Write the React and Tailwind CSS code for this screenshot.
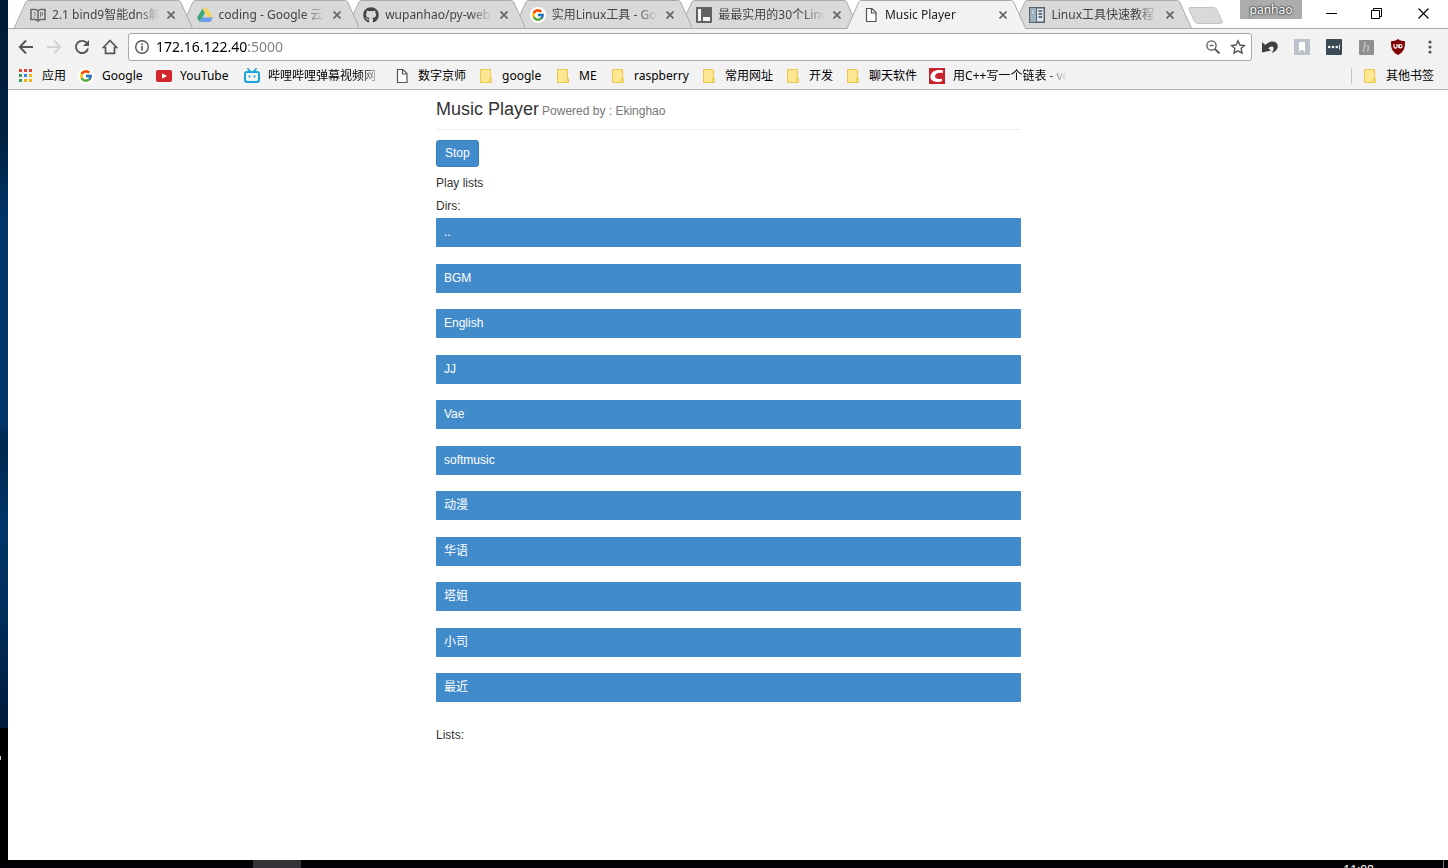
import React from "react";
import { FcGoogle } from "react-icons/fc";
import { FaGithub } from "react-icons/fa";

/* ---------- Icons ---------- */

const Svg = ({ className = "size-4", box = "0 0 16 16", children }) => (
  <svg viewBox={box} className={`${className} shrink-0`} fill="none" aria-hidden="true">
    {children}
  </svg>
);

const BookIcon = () => (
  <Svg>
    <path d="M1 2.500h5.200L8 4l1.800-1.500H15v10H10L8 14l-2-1.500H1z" stroke="#6b6b6b" strokeWidth="1.600" />
    <path d="M8 4v10" stroke="#6b6b6b" strokeWidth="1.600" />
    <path d="M3.500 5.500h1.500v4M10.500 10V5.500h2v2.500h-2M3.500 10.500h1" stroke="#7d7d7d" />
  </Svg>
);

const DriveIcon = () => (
  <Svg>
    <path d="M5.500 1.500 0 10.700 2.700 15 8.200 5.800z" fill="#3fa877" />
    <path d="M5.500 1.500h5L16 10.300h-5.300z" fill="#f8d25c" />
    <path d="M5.400 10.500H16L13.300 15H2.700z" fill="#6a9df0" />
  </Svg>
);

const GoogleIcon = () => (
  <span className="flex size-4 shrink-0 items-center justify-center rounded-full bg-white">
    <FcGoogle className="size-[14px]" />
  </span>
);

const GithubIcon = () => <FaGithub className="size-4 shrink-0 text-[#444]" />;

const PanelIcon = () => (
  <Svg>
    <rect x="0" y="0" width="16" height="16" rx="1" fill="#626262" />
    <path d="M2 2h3v12H2zM7 10h7v4H7z" fill="#f4f4f4" />
  </Svg>
);

const PageIcon = () => (
  <Svg>
    <path d="M3.500 1.500h5.500l4 4v9H3.500z" fill="#fff" stroke="#555" strokeWidth="1.200" />
    <path d="M8.500 1.500V6H13" stroke="#555" strokeWidth="1.200" />
  </Svg>
);

const LedgerIcon = () => (
  <Svg>
    <rect x="0.750" y="0.750" width="14.500" height="14.500" fill="#dfe7ec" stroke="#566370" strokeWidth="1.500" />
    <path d="M1.500 1.500H7v13H1.500z" fill="#9fb2c0" />
    <path d="M7.500 1v14" stroke="#566370" />
    <path d="M9.500 4H13M9.500 7H13M9.500 10H13" stroke="#3f4a54" strokeWidth="1.500" />
    <path d="M3 4h1.500M3 6h1.500" stroke="#e7eef3" />
  </Svg>
);

const AppsIcon = () => (
  <Svg>
    <path d="M1 1h3v3H1zM6 1h3v3H6zM11 1h3v3h-3z" fill="#e8403a" />
    <path d="M1 6h3v3H1zM1 11h3v3H1z" fill="#34a153" />
    <path d="M6 6h3v3H6z" fill="#2b86f0" />
    <path d="M11 6h3v3h-3zM6 11h3v3H6zM11 11h3v3h-3z" fill="#f5b50f" />
  </Svg>
);

const YoutubeIcon = () => (
  <Svg>
    <rect x="0" y="2" width="16" height="12" rx="2" fill="#d3252b" />
    <path d="M6 5.300v5.400L11 8z" fill="#fff" />
  </Svg>
);

const BiliIcon = () => (
  <Svg>
    <rect x="1" y="4" width="14" height="10" rx="2" stroke="#16a4dc" strokeWidth="2" />
    <path d="M4 1l2.200 2.500M12 1 9.800 3.500" stroke="#16a4dc" strokeWidth="1.800" strokeLinecap="round" />
    <path d="M5.500 7.500v2M10.500 7.500v2" stroke="#16a4dc" strokeWidth="1.800" />
  </Svg>
);

const FolderIcon = () => (
  <Svg>
    <path d="M2.500 1.500h10v9h1v4h-11z" fill="#ffe693" stroke="#efc74e" />
    <path d="M11.500 14v-3.500h1.500" stroke="#efc74e" />
  </Svg>
);

const RedCIcon = () => (
  <Svg>
    <path d="M0 0h16v16H0z" fill="#c8232c" />
    <path d="M14 5V2.500C8 1 2 3 1.500 8.500 1.200 13 6.500 15 13 13.300v-2.600C9 11.500 6 11 6 8.300 6.200 5 10 4.300 14 5z" fill="#fff" />
  </Svg>
);

const BackIcon = () => (
  <Svg>
    <path d="M15 8H2M8 1.500 1.800 8 8 14.500" stroke="#555" strokeWidth="1.900" />
  </Svg>
);

const ForwardIcon = () => (
  <Svg>
    <path d="M1 8h13M8 1.500 14.200 8 8 14.500" stroke="#d3d3d3" strokeWidth="1.900" />
  </Svg>
);

const ReloadIcon = () => (
  <Svg>
    <path d="M13 4.300A6.100 6.100 0 1 0 14 9.500" stroke="#555" strokeWidth="1.900" />
    <path d="M15 1v6H9z" fill="#555" />
  </Svg>
);

const HomeIcon = () => (
  <Svg>
    <path d="M8 1.500 1.300 8.500h2.200v5.800h9V8.500h2.200z" stroke="#555" strokeWidth="1.700" />
  </Svg>
);

const InfoIcon = () => (
  <Svg>
    <circle cx="8" cy="8" r="6.300" stroke="#555" strokeWidth="1.400" />
    <path d="M8 7v4.500M8 4.300v1.600" stroke="#555" strokeWidth="1.600" />
  </Svg>
);

const ZoomOutIcon = () => (
  <Svg>
    <circle cx="6.500" cy="6.500" r="4.600" stroke="#555" strokeWidth="1.300" />
    <path d="M4.500 6.500h4" stroke="#555" strokeWidth="1.200" />
    <path d="m10 10 4.500 4.500" stroke="#555" strokeWidth="1.800" />
  </Svg>
);

const StarIcon = () => (
  <Svg>
    <path
      d="m8 1.800 1.900 4.200 4.600.5-3.400 3.100.9 4.500L8 11.800l-4 2.300.9-4.500L1.500 6.500l4.600-.5z"
      stroke="#555"
      strokeWidth="1.400"
    />
  </Svg>
);

const UndoIcon = () => (
  <Svg>
    <path d="M0 3v10.500l9-2L6.300 9.300C9 6.500 12 7 11.500 10c-.2 1.500-1 2.800-1.800 4C14 12.500 16 10 15.800 6.800 15.500 2 8.500.500 3.500 6z" fill="#404040" />
  </Svg>
);

const BookmarkExtIcon = () => (
  <Svg>
    <path d="M0 0h16v16H0z" fill="#bcc2cb" />
    <path d="M5 3h6v10l-3-2.500L5 13z" fill="#fff" />
  </Svg>
);

const DotsExtIcon = () => (
  <Svg>
    <rect width="16" height="16" rx="1" fill="#3b4a54" />
    <circle cx="3.200" cy="8" r="1.300" fill="#fff" />
    <circle cx="7" cy="8" r="1.300" fill="#fff" />
    <circle cx="10.800" cy="8" r="1.300" fill="#fff" />
    <path d="M13.500 5.500v5" stroke="#dfe3e6" />
  </Svg>
);

const ScriptHIcon = () => (
  <span className="flex size-[15px] shrink-0 items-center justify-center rounded-[1px] bg-[#8f8f8f] font-['Liberation_Serif',serif] text-[15px] leading-none text-[#c4c4c4] italic">
    h
  </span>
);

const ShieldIcon = () => (
  <Svg>
    <path d="M8 0c2 1.500 4.500 2.200 7 2.200 0 6-.5 10.500-7 13.800C1.500 12.700 1 8.200 1 2.200 3.500 2.200 6 1.500 8 0z" fill="#800000" />
    <path d="M4 5v2.800c0 1.700 3 1.700 3 0V5M9 5.700v3.100" stroke="#fff" strokeWidth="1.200" />
    <circle cx="10.300" cy="7.200" r="1.700" stroke="#fff" strokeWidth="1.200" />
  </Svg>
);

const MenuIcon = () => (
  <Svg>
    <circle cx="8" cy="3" r="1.600" fill="#555" />
    <circle cx="8" cy="8" r="1.600" fill="#555" />
    <circle cx="8" cy="13" r="1.600" fill="#555" />
  </Svg>
);

const CrossIcon = () => (
  <Svg className="size-2" box="0 0 8 8">
    <path d="m.500.500 7 7M7.500.500l-7 7" stroke="#666" strokeWidth="1.700" />
  </Svg>
);

/* ---------- Data ---------- */

const tabs = [
  { title: "2.1 bind9智能dns解析", Icon: BookIcon, z: "z-10" },
  { title: "coding - Google 云端硬盘", Icon: DriveIcon, z: "z-[9]" },
  { title: "wupanhao/py-web-player", Icon: GithubIcon, z: "z-[8]" },
  { title: "实用Linux工具 - Google", Icon: GoogleIcon, z: "z-[7]" },
  { title: "最最实用的30个Linux命令", Icon: PanelIcon, z: "z-[6]" },
  { title: "Music Player", Icon: PageIcon, z: "z-20", active: true },
  { title: "Linux工具快速教程", Icon: LedgerIcon, z: "z-[4]" },
];

const bookmarks = [
  { name: "应用", Icon: AppsIcon },
  { name: "Google", Icon: GoogleIcon, width: "min-w-[42px]" },
  { name: "YouTube", Icon: YoutubeIcon, width: "min-w-[52px]" },
  { name: "哔哩哔哩弹幕视频网 - 动画", Icon: BiliIcon, fade: true },
  { name: "数字京师", Icon: PageIcon },
  { name: "google", Icon: FolderIcon, width: "min-w-[41px]" },
  { name: "ME", Icon: FolderIcon, width: "min-w-[19px]" },
  { name: "raspberry", Icon: FolderIcon, width: "min-w-[55px]" },
  { name: "常用网址", Icon: FolderIcon },
  { name: "开发", Icon: FolderIcon },
  { name: "聊天软件", Icon: FolderIcon },
  { name: "用C++写一个链表 - vector", Icon: RedCIcon, fade: true },
];

const extensions = [
  { name: "Undo", Icon: UndoIcon },
  { name: "Reading list", Icon: BookmarkExtIcon },
  { name: "Passwords", Icon: DotsExtIcon },
  { name: "Highlighter", Icon: ScriptHIcon },
  { name: "Ad blocker", Icon: ShieldIcon },
  { name: "Menu", Icon: MenuIcon },
];

const navigation = [
  { name: "Back", Icon: BackIcon },
  { name: "Forward", Icon: ForwardIcon },
  { name: "Reload", Icon: ReloadIcon },
  { name: "Home", Icon: HomeIcon },
];

const dirs = ["..", "BGM", "English", "JJ", "Vae", "softmusic", "动漫", "华语", "塔姐", "小司", "最近"];

/* ---------- Browser chrome ---------- */

function Tab({ title, Icon, z, active }) {
  return (
    <div className={`relative -mr-3 flex h-[29px] min-w-0 flex-1 items-center pr-[18px] pl-4 ${z}`}>
      <svg
        className="absolute inset-0 h-full w-full"
        viewBox="0 0 179 29"
        preserveAspectRatio="none"
        aria-hidden="true"
      >
        <path
          d="M0 29L11.500 3C12.500 1 13 .500 15 .500H164c2 0 2.500.500 3.500 2.500L179 29z"
          fill={active ? "#f2f2f2" : "#d9d9d9"}
        />
        <path
          d="M0 28.500L11.500 3C12.500 1 13 .500 15 .500H164c2 0 2.500.500 3.500 2.500L179 28.500"
          fill="none"
          stroke="#a9a9a9"
        />
        {!active && <path d="M0 28.500H179" stroke="#a9a9a9" />}
      </svg>
      <button className="relative flex min-w-0 flex-1 items-center gap-[6px] text-left">
        <Icon />
        <span
          className={`min-w-0 flex-1 overflow-hidden [mask-image:linear-gradient(to_right,black_80%,transparent)] whitespace-nowrap ${
            active ? "text-[#222]" : "text-[#444]"
          }`}
        >
          {title}
        </span>
      </button>
      <button aria-label={`Close ${title}`} className="relative ml-2">
        <CrossIcon />
      </button>
    </div>
  );
}

function TabStrip() {
  return (
    <div className="flex h-[29px] border-b border-[#a9a9a9] pl-[6px]">
      <div className="flex h-[29px] max-w-[1166px] min-w-0 flex-1">
        {tabs.map((tab) => (
          <Tab key={tab.title} {...tab} />
        ))}
      </div>
      <button aria-label="New tab" className="mt-[7px] ml-2 h-[17px]">
        <svg className="h-[17px] w-[35px]" viewBox="0 0 35 17" aria-hidden="true">
          <path d="M2 .500h23c2 0 3 .500 4 2.500l5 11c.7 1.500 0 2.500-1.500 2.500H10c-2 0-3-1-4-3L1 2.500C.300 1 1 .500 2 .500z" fill="#d9d9d9" stroke="#c4c4c4" />
        </svg>
      </button>
      <div className="ml-auto flex items-start">
        <button className="mr-[7px] h-[19px] w-[62px] bg-[#acacac] leading-5 text-white [text-shadow:0_0_2px_#222,0_0_2px_#222]">
          panhao
        </button>
        <button aria-label="Minimize" className="flex h-[26px] w-[45px] items-center justify-center">
          <Svg className="size-[11px]" box="0 0 11 11">
            <path d="M0 5.500h11" stroke="#000" />
          </Svg>
        </button>
        <button aria-label="Restore" className="flex h-[26px] w-[45px] items-center justify-center">
          <Svg className="size-[11px]" box="0 0 11 11">
            <path d="M.500 2.500h8v8h-8zM2.500 2.500v-2h8v8h-2" stroke="#000" />
          </Svg>
        </button>
        <button aria-label="Close" className="flex h-[26px] w-[49px] items-center justify-center">
          <Svg className="size-[11px]" box="0 0 11 11">
            <path d="m.500.500 10 10M10.500.500l-10 10" stroke="#000" strokeWidth="1.100" />
          </Svg>
        </button>
      </div>
    </div>
  );
}

function Toolbar() {
  return (
    <div className="flex h-9 items-center bg-[#f2f2f2] pr-[10px] pl-[10px]">
      <div className="flex gap-3">
        {navigation.map(({ name, Icon }) => (
          <button key={name} aria-label={name}>
            <Icon />
          </button>
        ))}
      </div>
      <div className="ml-[10px] flex h-7 flex-1 items-center rounded-[3px] border border-[#a9a9a9] bg-white px-[5px]">
        <InfoIcon />
        <input
          aria-label="Address"
          defaultValue="172.16.122.40:5000"
          className="ml-[6px] min-w-0 flex-1 bg-[linear-gradient(to_right,#000_91px,#808080_91px)] bg-clip-text text-sm text-transparent caret-black outline-none"
        />
        <button aria-label="Zoom" className="ml-2">
          <ZoomOutIcon />
        </button>
        <button aria-label="Bookmark this page" className="ml-[9px]">
          <StarIcon />
        </button>
      </div>
      <div className="ml-[10px] flex items-center gap-4">
        {extensions.map(({ name, Icon }) => (
          <button key={name} aria-label={name} className="flex size-4 items-center justify-center">
            <Icon />
          </button>
        ))}
      </div>
    </div>
  );
}

function Bookmark({ name, Icon, fade, width = "" }) {
  return (
    <a href="#" className="flex shrink-0 items-center gap-2">
      <Icon />
      <span
        className={
          fade
            ? "w-[114px] overflow-hidden [mask-image:linear-gradient(to_right,black_80%,transparent)] whitespace-nowrap"
            : `whitespace-nowrap ${width}`
        }
      >
        {name}
      </span>
    </a>
  );
}

function BookmarkBar() {
  return (
    <nav
      aria-label="Bookmarks"
      className="flex h-[25px] items-start border-b border-[#b4b4b4] bg-[#f2f2f2] pr-[14px] pl-[10px] leading-[22px] text-black"
    >
      <div className="flex min-w-0 flex-1 gap-3 overflow-hidden">
        {bookmarks.map((bookmark) => (
          <Bookmark key={bookmark.name} {...bookmark} />
        ))}
      </div>
      <div className="flex items-center gap-[10px]">
        <span className="h-4 w-px bg-[#c4c4c4]" />
        <Bookmark name="其他书签" Icon={FolderIcon} />
      </div>
    </nav>
  );
}

/* ---------- Page ---------- */

function MusicPlayer() {
  return (
    <main className="min-h-0 flex-1 overflow-hidden bg-white pl-px font-['Liberation_Sans','Noto_Sans_CJK_SC',sans-serif] text-xs text-[#333]">
      <div className="mx-auto max-w-[585px]">
        <h1 className="border-b border-[#eee] pt-[9px] pb-[10px] text-lg leading-5">
          Music Player <small className="-ml-[2px] text-xs text-[#777]">Powered by : Ekinghao</small>
        </h1>
        <button className="mt-[10px] block h-[27px] rounded-[3px] border border-[#357ebd] bg-[#428bca] px-2 pb-[2px] text-white">
          Stop
        </button>
        <p className="mt-2 leading-4">Play lists</p>
        <p className="mt-[7px] leading-4">Dirs:</p>
        <ul className="mt-1">
          {dirs.map((dir) => (
            <li key={dir} className="odd:mb-[17px] even:mb-4">
              <a href="#" className="block h-[29px] rounded-[1px] bg-[#428bca] px-2 leading-7 text-white">
                {dir}
              </a>
            </li>
          ))}
        </ul>
        <p className="mt-[25px] leading-4">Lists:</p>
      </div>
    </main>
  );
}

export default function App() {
  return (
    <div className="flex h-screen flex-col overflow-hidden bg-[#000205] font-['Noto_Sans','Noto_Sans_CJK_SC',sans-serif] text-xs">
      <div className="flex min-h-0 flex-1">
        <div className="flex w-2 shrink-0 flex-col">
          <div className="flex-1 bg-[linear-gradient(to_bottom,#001a38_0%,#00203f_18%,#003468_30%,#003468_58%,#002850_61%,#003568_72%,#002d5a_85%,#001a3c_100%)]" />
          <div className="h-[132px] bg-black pt-7">
            <div className="h-1 w-px bg-[#ccc]" />
          </div>
        </div>
        <div className="flex min-w-0 flex-1 flex-col bg-white">
          <TabStrip />
          <Toolbar />
          <BookmarkBar />
          <MusicPlayer />
        </div>
      </div>
      <footer className="flex h-2 shrink-0 overflow-hidden text-white">
        <div className="ml-[253px] w-12 bg-[#333437]" />
        <time className="mt-[2px] mr-[69px] ml-auto leading-4">11:08</time>
        <div className="mr-1 w-px bg-[#777]" />
      </footer>
    </div>
  );
}
